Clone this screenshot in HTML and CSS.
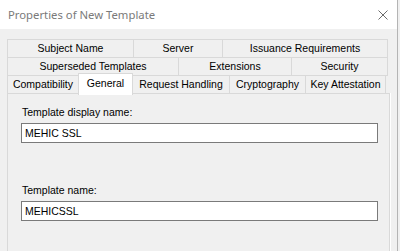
FILE: index.html
```html
<!DOCTYPE html>
<html lang="en">
<head>
  <meta charset="UTF-8">
  <title>Properties of New Template</title>
  <link rel="stylesheet" href="styles.css">
</head>
<body>
  <div class="window">
    <div class="titlebar">
      <span class="title">Properties of New Template</span>
      <svg class="close" width="10" height="10" viewBox="0 0 10 10">
        <path d="M0.5 0.5 L9.5 9.5 M9.5 0.5 L0.5 9.5" stroke="#6b6b6b" stroke-width="1" fill="none"/>
      </svg>
    </div>

    <div class="content">
      <div class="tab-strip">
        <div class="tab-row">
          <div class="tab w-subject">Subject Name</div>
          <div class="tab w-server">Server</div>
          <div class="tab w-issuance">Issuance Requirements</div>
        </div>
        <div class="tab-row">
          <div class="tab w-superseded">Superseded Templates</div>
          <div class="tab w-extensions">Extensions</div>
          <div class="tab w-security">Security</div>
        </div>
        <div class="tab-row">
          <div class="tab w-compat">Compatibility</div>
          <div class="tab w-general selected">General</div>
          <div class="tab w-request">Request Handling</div>
          <div class="tab w-crypto">Cryptography</div>
          <div class="tab w-key">Key Attestation</div>
        </div>
      </div>

      <div class="tab-panel">
        <label class="field-label" for="display-name">Template display name:</label>
        <input class="field" id="display-name" type="text" value="MEHIC SSL">

        <label class="field-label second" for="template-name">Template name:</label>
        <input class="field" id="template-name" type="text" value="MEHICSSL">
      </div>
    </div>
  </div>
</body>
</html>
```

FILE: styles.css
```css
body {
  margin: 0;
  padding: 0;
  width: 400px;
  height: 251px;
  overflow: hidden;
  background-color: #f0f0f0;
  font-family: 'Liberation Sans', Arial, sans-serif;
  font-size: 10.5px;
  color: #000;
}

.window {
  width: 397px;
  height: 251px;
  border-right: 1px solid #b4b4b4;
  background-color: #f0f0f0;
}

.titlebar {
  height: 29px;
  background-color: #fff;
  display: flex;
  align-items: center;
  justify-content: space-between;
  padding: 0 9px 0 8px;
}

.title {
  font-family: 'Noto Sans', 'Open Sans', sans-serif;
  font-size: 11.3px;
  color: #7a7a7a;
}

.close {
  display: block;
}

.content {
  padding: 10px 0 0 7px;
}

.tab-row {
  display: flex;
  margin-top: -1px;
}

.tab-row:first-child {
  margin-top: 0;
}

.tab {
  box-sizing: border-box;
  height: 19px;
  line-height: 17px;
  border: 1px solid #d9d9d9;
  margin-left: -1px;
  text-align: center;
  white-space: nowrap;
  background-color: #f0f0f0;
}

.tab:first-child {
  margin-left: 0;
}

.tab.selected {
  position: relative;
  z-index: 1;
  height: 22px;
  margin-top: -2px;
  line-height: 18px;
  background-color: #fff;
  border-bottom: none;
}

.w-subject { width: 127px; }
.w-server { width: 90px; }
.w-issuance { width: 166px; }

.w-superseded { width: 172px; }
.w-extensions { width: 114px; }
.w-security { width: 97px; }

.w-compat { width: 72px; }
.w-general { width: 55px; }
.w-request { width: 98px; }
.w-crypto { width: 77px; }
.w-key { width: 81px; }

.tab-panel {
  box-sizing: border-box;
  width: 383px;
  height: 160px;
  margin-top: -2px;
  border: 1px solid #d9d9d9;
  border-bottom: none;
  box-shadow: 1px 0 0 #fff;
  padding: 12px 0 0 13px;
  display: flex;
  flex-direction: column;
  align-items: flex-start;
}

.field-label {
  line-height: 13px;
  margin-left: 1px;
}

.field-label.second {
  margin-top: 41px;
}

.field {
  box-sizing: border-box;
  width: 357px;
  height: 20px;
  margin: 4px 0 0 0;
  padding: 0 3px;
  border: 1px solid #7a7a7a;
  background-color: #fff;
  font-family: 'Liberation Sans', Arial, sans-serif;
  font-size: 10.5px;
  color: #000;
  outline: none;
}
```
